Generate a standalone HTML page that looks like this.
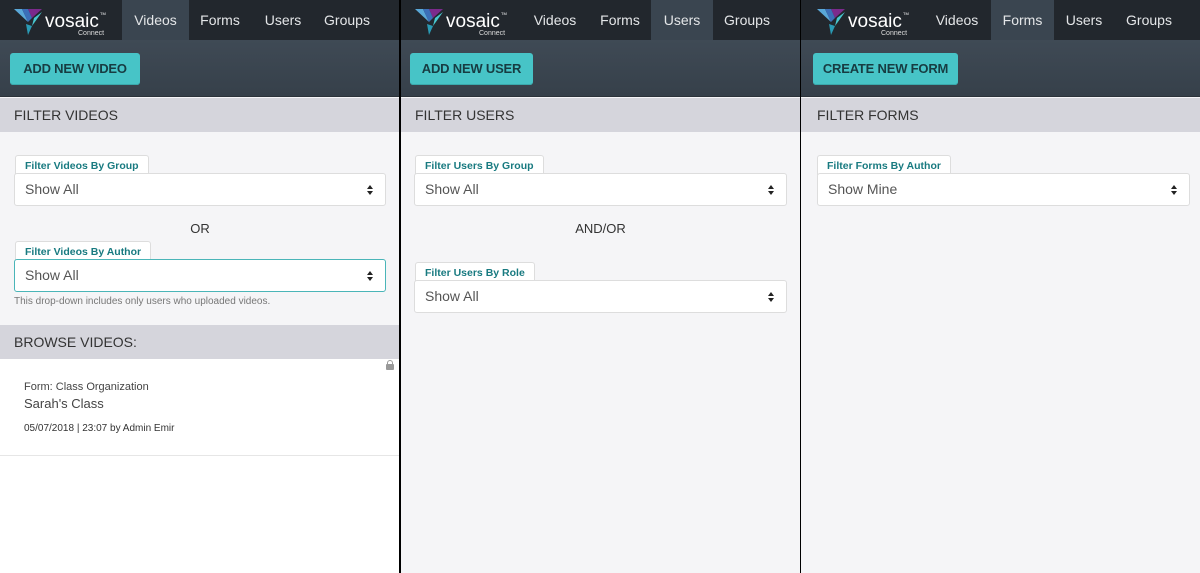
<!DOCTYPE html>
<html><head><meta charset="utf-8"><style>
*{box-sizing:border-box;margin:0;padding:0}
body{width:1200px;height:573px;overflow:hidden;background:#000;font-family:"Liberation Sans",sans-serif;position:relative}
.p{position:absolute;top:0;height:573px;background:#f5f5f7;overflow:hidden}
.nav{position:absolute;left:0;top:0;right:0;height:40px;background:#22272d}
.tab{position:absolute;top:0;height:40px;line-height:40px;color:#e4e6e8;font-size:14px;text-align:center}
.tab.a{background:#3a4550}
.sub{position:absolute;left:0;right:0;top:40px;height:57px;background:linear-gradient(#3f4a55,#36404a);border-bottom:1px solid #2c333a}
.btn{position:absolute;top:13px;height:32px;line-height:32px;background:#47c4c7;border-radius:3px;color:#173c42;font-size:13px;font-weight:bold;text-align:center;letter-spacing:-0.2px;box-shadow:inset 0 -1px 0 #3aa9ac}
.fh{position:absolute;left:0;right:0;top:98px;height:34px;line-height:34px;background:#d5d5dc;color:#333;font-size:14px;padding-left:14px}
.lab{position:absolute;height:20px;line-height:20px;background:#fff;border:1px solid #ddd;border-bottom:none;border-radius:3px 3px 0 0;color:#187a80;font-size:10.5px;font-weight:bold;padding:0 9px;white-space:nowrap}
.sel{position:absolute;height:33px;line-height:31px;background:#fff;border:1px solid #ddd;border-radius:3px;color:#555;font-size:14px;padding-left:10px}
.sel:after{content:"";position:absolute;right:12px;top:11px;border:3px solid transparent;border-bottom:4px solid #222;border-top:none}
.sel:before{content:"";position:absolute;right:12px;top:17px;border:3px solid transparent;border-top:4px solid #222;border-bottom:none}
.logo{position:absolute;left:14px;top:6px}
.mid{position:absolute;font-size:13px;color:#333;text-align:center}
</style></head><body>

<!-- panel 1 -->
<div class="p" style="left:0;width:399px">
<div class="nav">
<svg class="logo" width="100" height="30" viewBox="0 0 100 30"><polygon points="0,3 8,3 14,16" fill="#5aa8d8"/><polygon points="14,3 28,3 18,12" fill="#7b2a8c"/><polygon points="8,3 14,3 18,12 14,16" fill="#3b6fb8"/><polygon points="20,12 28,6 18,20" fill="#48c8d0"/><polygon points="12,18 18,20 14,29" fill="#2a9bb5"/><text x="31" y="21" font-size="19" fill="#fff" font-family="Liberation Sans">vosaic</text><text x="86" y="9" font-size="4" fill="#fff">TM</text><text x="64" y="29" font-size="7" fill="#ddd">Connect</text></svg>
<div class="tab a" style="left:122px;width:67px">Videos</div>
<div class="tab" style="left:190px;width:60px">Forms</div>
<div class="tab" style="left:256px;width:54px">Users</div>
<div class="tab" style="left:315px;width:64px">Groups</div>
</div>
<div class="sub"><div class="btn" style="left:10px;width:130px">ADD NEW VIDEO</div></div>
<div class="fh">FILTER VIDEOS</div>
<div class="lab" style="left:15px;top:155px">Filter Videos By Group</div>
<div class="sel" style="left:14px;top:173px;width:372px">Show All</div>
<div class="mid" style="left:0;width:400px;top:221px">OR</div>
<div class="lab" style="left:15px;top:241px">Filter Videos By Author</div>
<div class="sel" style="left:14px;top:259px;width:372px;border-color:#4ab5b8">Show All</div>
<div style="position:absolute;left:14px;top:296px;font-size:10px;color:#777">This drop-down includes only users who uploaded videos.</div>
<div class="fh" style="top:325px">BROWSE VIDEOS:</div>
<div style="position:absolute;left:0;right:0;top:359px;bottom:0;background:#fff">
<div style="position:absolute;left:0;right:0;top:96px;height:1px;background:#e6e6e6"></div>
<div style="position:absolute;right:5px;top:5px;width:8px;height:6px;background:#999;border-radius:1px"></div>
<div style="position:absolute;right:6px;top:1px;width:6px;height:6px;border:1.5px solid #999;border-bottom:none;border-radius:3px 3px 0 0"></div>
<div style="position:absolute;left:24px;top:22px;font-size:11px;color:#444">Form: Class Organization</div>
<div style="position:absolute;left:24px;top:37px;font-size:13px;color:#444">Sarah's Class</div>
<div style="position:absolute;left:24px;top:64px;font-size:10px;color:#333">05/07/2018 | 23:07 by Admin Emir</div>
</div>
</div>

<!-- panel 2 -->
<div class="p" style="left:401px;width:399px">
<div class="nav">
<svg class="logo" width="100" height="30" viewBox="0 0 100 30" style="left:14px"><polygon points="0,3 8,3 14,16" fill="#5aa8d8"/><polygon points="14,3 28,3 18,12" fill="#7b2a8c"/><polygon points="8,3 14,3 18,12 14,16" fill="#3b6fb8"/><polygon points="20,12 28,6 18,20" fill="#48c8d0"/><polygon points="12,18 18,20 14,29" fill="#2a9bb5"/><text x="31" y="21" font-size="19" fill="#fff">vosaic</text><text x="86" y="9" font-size="4" fill="#fff">TM</text><text x="64" y="29" font-size="7" fill="#ddd">Connect</text></svg>
<div class="tab" style="left:122px;width:64px">Videos</div>
<div class="tab" style="left:190px;width:58px">Forms</div>
<div class="tab a" style="left:250px;width:62px">Users</div>
<div class="tab" style="left:313px;width:66px">Groups</div>
</div>
<div class="sub"><div class="btn" style="left:9px;width:123px">ADD NEW USER</div></div>
<div class="fh">FILTER USERS</div>
<div class="lab" style="left:14px;top:155px">Filter Users By Group</div>
<div class="sel" style="left:13px;top:173px;width:373px">Show All</div>
<div class="mid" style="left:0;width:399px;top:221px">AND/OR</div>
<div class="lab" style="left:14px;top:262px">Filter Users By Role</div>
<div class="sel" style="left:13px;top:280px;width:373px">Show All</div>
</div>

<!-- panel 3 -->
<div class="p" style="left:801px;width:399px">
<div class="nav">
<svg class="logo" width="100" height="30" viewBox="0 0 100 30" style="left:16px"><polygon points="0,3 8,3 14,16" fill="#5aa8d8"/><polygon points="14,3 28,3 18,12" fill="#7b2a8c"/><polygon points="8,3 14,3 18,12 14,16" fill="#3b6fb8"/><polygon points="20,12 28,6 18,20" fill="#48c8d0"/><polygon points="12,18 18,20 14,29" fill="#2a9bb5"/><text x="31" y="21" font-size="19" fill="#fff">vosaic</text><text x="86" y="9" font-size="4" fill="#fff">TM</text><text x="64" y="29" font-size="7" fill="#ddd">Connect</text></svg>
<div class="tab" style="left:124px;width:64px">Videos</div>
<div class="tab a" style="left:190px;width:63px">Forms</div>
<div class="tab" style="left:255px;width:56px">Users</div>
<div class="tab" style="left:316px;width:64px">Groups</div>
</div>
<div class="sub"><div class="btn" style="left:12px;width:145px">CREATE NEW FORM</div></div>
<div class="fh" style="padding-left:16px">FILTER FORMS</div>
<div class="lab" style="left:16px;top:155px">Filter Forms By Author</div>
<div class="sel" style="left:16px;top:173px;width:373px">Show Mine</div>
</div>
</body></html>
